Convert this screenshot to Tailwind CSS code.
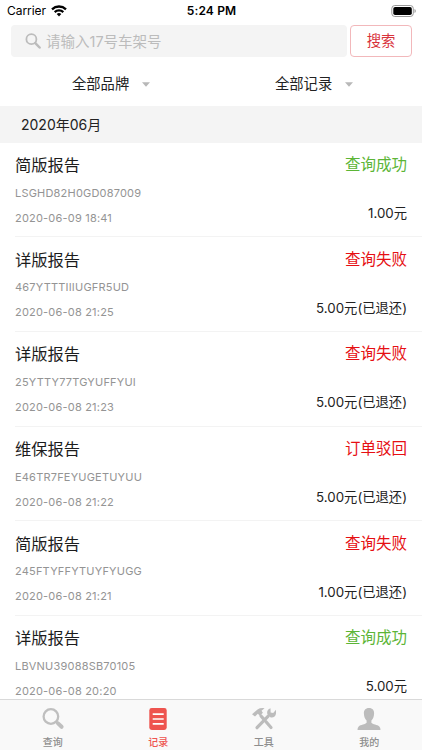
<!DOCTYPE html>
<html lang="zh-CN">
<head>
    <meta charset="UTF-8">
    <meta name="viewport" content="width=device-width, initial-scale=1.0">
    <title>查询记录</title>
    <script src="https://cdn.jsdelivr.net/npm/@tailwindcss/browser@4"></script>
</head>
<body class="bg-white font-['Inter','Noto_Sans_CJK_SC',sans-serif] text-[#222]">
    <div class="w-[422px] h-[750px] flex flex-col overflow-hidden">
        <!-- Status bar -->
        <div class="h-[22px] shrink-0 grid grid-cols-3 items-center pl-[7px] pr-[6px] text-[12px] leading-[22px] text-black">
            <div class="flex items-center gap-[5px]">
                <span class="tracking-[-0.05px]">Carrier</span>
                <svg class="w-[16px] h-[12px]" viewBox="0 0 16 12" fill="none" stroke="#000" stroke-width="2.3">
                    <path d="M1 4.3a10.2 10.2 0 0 1 14 0"></path>
                    <path d="M3.7 7.1a6.2 6.2 0 0 1 8.6 0"></path>
                    <path d="M8 11.5L5.7 9.1a3.4 3.4 0 0 1 4.6 0z" fill="#000" stroke="none"></path>
                </svg>
            </div>
            <div class="text-center font-semibold text-[12px] tracking-[0.15px]">5:24 PM</div>
            <svg class="w-[26px] h-[12px] justify-self-end" viewBox="0 0 26 12">
                <rect x="1.8" y="0.5" width="21.5" height="11" rx="3" fill="#fff" stroke="#999"></rect>
                <rect x="3.3" y="2" width="18.5" height="8" rx="1.8" fill="#000"></rect>
                <path d="M24.5 4v4q1.3-.7 1.3-2t-1.3-2z" fill="#999"></path>
            </svg>
        </div>

        <!-- Search -->
        <div class="h-[38px] shrink-0 flex gap-[3px] pl-[11px] pr-[10px] pt-[3px]">
            <div class="flex-1 h-[32px] bg-[#f4f4f4] rounded-[4px] flex items-center pl-[14px] gap-[5px] text-[#bcbcbc]">
                <svg class="w-[16px] h-[16px]" viewBox="0 0 16 16" fill="none" stroke="currentColor">
                    <circle cx="6.4" cy="6.2" r="5" stroke-width="1.8"></circle>
                    <path d="M10.3 10.1l4.3 4.4" stroke-width="2.5" stroke-linecap="round"></path>
                </svg>
                <span class="text-[14.5px] leading-[20px] pt-px">请输入17号车架号</span>
            </div>
            <button class="w-[62px] h-[32px] border border-[#f2b8bb] rounded-[4px] text-[14.3px] leading-[20px] text-[#d8323b]">搜索</button>
        </div>

        <!-- Filters -->
        <div class="h-[46px] shrink-0 grid grid-cols-2 text-[14.3px] leading-[20px]">
            <div class="flex items-center pl-[72px] pt-[2px] gap-[13px]">
                <span>全部品牌</span>
                <svg class="w-[8px] h-[5px]" viewBox="0 0 9 5"><path d="M0 0h9L4.5 5z" fill="#b8b8b8"></path></svg>
            </div>
            <div class="flex items-center pl-[64px] pt-[2px] gap-[13px]">
                <span>全部记录</span>
                <svg class="w-[8px] h-[5px]" viewBox="0 0 9 5"><path d="M0 0h9L4.5 5z" fill="#b8b8b8"></path></svg>
            </div>
        </div>

        <div class="h-[36.5px] shrink-0 bg-[#f4f4f4] flex items-center pl-[21px] pt-px text-[14px] leading-[20px]">2020年06月</div>

        <!-- Records -->
        <div class="flex-1 min-h-0 overflow-hidden pl-[15px]">
            <div class="h-[94.7px] flex justify-between border-b border-[#f3f3f3] pr-[15px]">
                <div class="pt-[9.5px] text-[11px] leading-[20px] tracking-[0.2px] text-[#949494]">
                    <h3 class="text-[16.3px] leading-[26px] tracking-normal text-[#1c1c1c]">简版报告</h3>
                    <p class="mt-[4.5px]">LSGHD82H0GD087009</p>
                    <p class="mt-[5px]">2020-06-09 18:41</p>
                </div>
                <div class="pt-[9.5px] text-right">
                    <p class="text-[15.5px] leading-[26px] text-[#5cb536]">查询成功</p>
                    <p class="mt-[25px] text-[13.3px] leading-[20px]">1.00元</p>
                </div>
            </div>
            <div class="h-[94.7px] flex justify-between border-b border-[#f3f3f3] pr-[15px]">
                <div class="pt-[9.5px] text-[11px] leading-[20px] tracking-[0.2px] text-[#949494]">
                    <h3 class="text-[16.3px] leading-[26px] tracking-normal text-[#1c1c1c]">详版报告</h3>
                    <p class="mt-[4.5px]">467YTTTIIIUGFR5UD</p>
                    <p class="mt-[5px]">2020-06-08 21:25</p>
                </div>
                <div class="pt-[9.5px] text-right">
                    <p class="text-[15.5px] leading-[26px] text-[#e60f13]">查询失败</p>
                    <p class="mt-[25px] text-[13.3px] leading-[20px]">5.00元(已退还)</p>
                </div>
            </div>
            <div class="h-[94.7px] flex justify-between border-b border-[#f3f3f3] pr-[15px]">
                <div class="pt-[9.5px] text-[11px] leading-[20px] tracking-[0.2px] text-[#949494]">
                    <h3 class="text-[16.3px] leading-[26px] tracking-normal text-[#1c1c1c]">详版报告</h3>
                    <p class="mt-[4.5px]">25YTTY77TGYUFFYUI</p>
                    <p class="mt-[5px]">2020-06-08 21:23</p>
                </div>
                <div class="pt-[9.5px] text-right">
                    <p class="text-[15.5px] leading-[26px] text-[#e60f13]">查询失败</p>
                    <p class="mt-[25px] text-[13.3px] leading-[20px]">5.00元(已退还)</p>
                </div>
            </div>
            <div class="h-[94.7px] flex justify-between border-b border-[#f3f3f3] pr-[15px]">
                <div class="pt-[9.5px] text-[11px] leading-[20px] tracking-[0.2px] text-[#949494]">
                    <h3 class="text-[16.3px] leading-[26px] tracking-normal text-[#1c1c1c]">维保报告</h3>
                    <p class="mt-[4.5px]">E46TR7FEYUGETUYUU</p>
                    <p class="mt-[5px]">2020-06-08 21:22</p>
                </div>
                <div class="pt-[9.5px] text-right">
                    <p class="text-[15.5px] leading-[26px] text-[#e60f13]">订单驳回</p>
                    <p class="mt-[25px] text-[13.3px] leading-[20px]">5.00元(已退还)</p>
                </div>
            </div>
            <div class="h-[94.7px] flex justify-between border-b border-[#f3f3f3] pr-[15px]">
                <div class="pt-[9.5px] text-[11px] leading-[20px] tracking-[0.2px] text-[#949494]">
                    <h3 class="text-[16.3px] leading-[26px] tracking-normal text-[#1c1c1c]">简版报告</h3>
                    <p class="mt-[4.5px]">245FTYFFYTUYFYUGG</p>
                    <p class="mt-[5px]">2020-06-08 21:21</p>
                </div>
                <div class="pt-[9.5px] text-right">
                    <p class="text-[15.5px] leading-[26px] text-[#e60f13]">查询失败</p>
                    <p class="mt-[25px] text-[13.3px] leading-[20px]">1.00元(已退还)</p>
                </div>
            </div>
            <div class="h-[94.7px] flex justify-between border-b border-[#f3f3f3] pr-[15px]">
                <div class="pt-[9.5px] text-[11px] leading-[20px] tracking-[0.2px] text-[#949494]">
                    <h3 class="text-[16.3px] leading-[26px] tracking-normal text-[#1c1c1c]">详版报告</h3>
                    <p class="mt-[4.5px]">LBVNU39088SB70105</p>
                    <p class="mt-[5px]">2020-06-08 20:20</p>
                </div>
                <div class="pt-[9.5px] text-right">
                    <p class="text-[15.5px] leading-[26px] text-[#5cb536]">查询成功</p>
                    <p class="mt-[25px] text-[13.3px] leading-[20px]">5.00元</p>
                </div>
            </div>
        </div>

        <!-- Tab bar -->
        <nav class="h-[51px] shrink-0 grid grid-cols-4 border-t border-[#d9d9d9] bg-[#f9f9f9] text-[10px] leading-[14px] font-medium text-[#8e8e8e]">
            <div class="flex flex-col items-center pt-[7px] gap-[4px]">
                <svg class="w-[24px] h-[24px]" viewBox="0 0 24 24" fill="none" stroke="#bfbfbf">
                    <circle cx="9.9" cy="9.5" r="7.3" stroke-width="2.3"></circle>
                    <path d="M15 14.5l2 2" stroke-width="2.4"></path>
                    <path d="M17 16.4l3.6 3.4" stroke-width="4" stroke-linecap="round"></path>
                </svg>
                <span>查询</span>
            </div>
            <div class="flex flex-col items-center pt-[7px] gap-[4px] text-[#ee544f]">
                <svg class="w-[24px] h-[24px]" viewBox="0 0 24 24">
                    <rect x="3.3" y="1" width="17.4" height="22" rx="2.4" fill="#ee544f"></rect>
                    <path d="M6.7 7.2h11M6.7 12h11M6.7 16.8h11" stroke="#fff" stroke-width="1.7"></path>
                </svg>
                <span>记录</span>
            </div>
            <div class="flex flex-col items-center pt-[7px] gap-[4px]">
                <!-- Hammer crossed with a wrench -->
                <svg class="w-[24px] h-[24px]" viewBox="0 0 24 24" fill="none" stroke="#bcbcbc">
                    <path d="M0 7.2L5.5 2.5Q8.5 .5 12.6 1.2L9.5 3.8 10.9 5.8 8 8.8 5.8 6.7 3 9.4z" fill="#bcbcbc" stroke="none"></path>
                    <path d="M9 9l3 3.4M14 14.8l5 5.7" stroke-width="3.2" stroke-linecap="round"></path>
                    <path d="M16.2 9.2L5 20.7" stroke-width="3.2" stroke-linecap="round"></path>
                    <path d="M18.5 1.2c-3 .9-4 3.8-3 6.200l2.8 2.8c2.5 1 5.4-.6 5.7-3.7V2.8l-2.8 3.3-2.6-.7z" fill="#bcbcbc" stroke="none"></path>
                </svg>
                <span>工具</span>
            </div>
            <div class="flex flex-col items-center pt-[7px] gap-[4px]">
                <svg class="w-[24px] h-[24px]" viewBox="0 0 24 24" fill="#bcbcbc">
                    <path d="M12 1c-3.6 0-5.3 2.4-5.1 5.6.1 3.4 1.1 5.3 2.7 6.900v2.2c-1.2 1.5-6 2-7.9 3.7Q.4 20.4.5 23h23q.1-2.6-1.2-3.6c-1.9-1.7-6.7-2.2-7.9-3.700v-2.2c1.6-1.6 2.6-3.5 2.7-6.9C17.3 3.4 15.6 1 12 1z"></path>
                </svg>
                <span>我的</span>
            </div>
        </nav>
    </div>
</body>
</html>
